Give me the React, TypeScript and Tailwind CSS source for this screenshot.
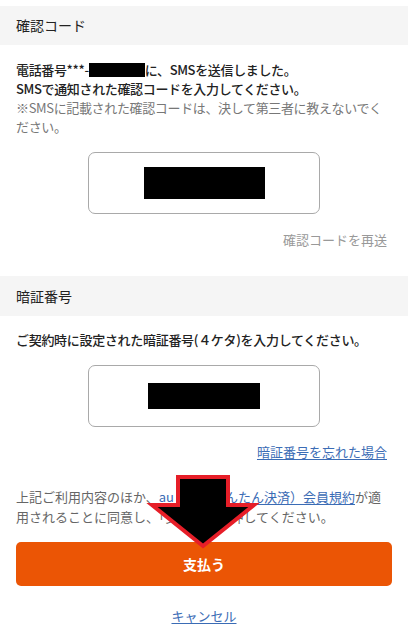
function MaskedInput({ maskW, maskH }: { maskW: string; maskH: string }) {
  return (
    <div className="mx-auto w-[232px] h-[62px] rounded-[7px] border border-[#a9a9a9] flex items-center justify-center">
      <div className={`${maskW} ${maskH} bg-black`} />
    </div>
  );
}

export default function App() {
  return (
    <div
      className="relative w-[408px] h-[642px] overflow-hidden bg-white text-[#222]"
      style={{ fontFamily: '"Noto Sans CJK JP", "Noto Sans", sans-serif' }}
    >
      <div className="pt-[6px]">
        <div className="h-[39px] bg-[#f5f5f5] px-4 flex items-center text-[14px]">
          確認コード
        </div>

        <div className="px-4 pt-[15px] text-[13px] leading-[19px] tracking-[-0.35px]">
          <p className="font-medium">
            電話番号***-
            <span className="inline-block w-[56px] h-[14px] bg-black align-[-2px]" />
            に、SMSを送信しました。
          </p>
          <p className="font-medium">SMSで通知された確認コードを入力してください。</p>
          <p className="text-[#777]">
            ※SMSに記載された確認コードは、決して第三者に教えないでください。
          </p>
        </div>

        <div className="pt-[16px]">
          <MaskedInput maskW="w-[121px]" maskH="h-[32px]" />
        </div>

        <div className="px-[21px] pt-[17px] text-right text-[13px] leading-[18px] text-[#999]">
          確認コードを再送
        </div>

        <div className="mt-[27px] h-[40px] bg-[#f5f5f5] px-4 flex items-center text-[14px]">
          暗証番号
        </div>

        <div className="px-4 pt-[14px] text-[13px] leading-[19px] font-medium tracking-[-0.3px]">
          ご契約時に設定された暗証番号(４ケタ)を入力してください。
        </div>

        <div className="pt-[16px]">
          <MaskedInput maskW="w-[112px]" maskH="h-[26px]" />
        </div>

        <div className="px-[21px] pt-[16px] text-right text-[13px] leading-[18px]">
          <a className="text-[#3b6cb5] underline underline-offset-2">暗証番号を忘れた場合</a>
        </div>

        <p className="px-4 pt-[26px] text-[13px] leading-[20px] text-[#666]">
          上記ご利用内容のほか、
          <a className="text-[#3b6cb5] underline underline-offset-2">au PAY（かんたん決済）会員規約</a>
          が適用されることに同意し、「支払う」を押してください。
        </p>

        <div className="px-4 pt-[15px]">
          <button className="w-full h-[44px] rounded-[5px] bg-[#eb5505] text-white text-[14px] font-bold">
            支払う
          </button>
        </div>

        <div className="pt-[21px] text-center text-[13px] leading-[18px]">
          <a className="text-[#3b6cb5] underline underline-offset-2">キャンセル</a>
        </div>
      </div>

      <svg className="absolute left-0 top-0" width="408" height="642" viewBox="0 0 408 642">
        <polygon
          points="178,477 228,477 228,505 254,505 203,546 152,505 178,505"
          fill="#000"
          stroke="#e61e28"
          strokeWidth="4"
          strokeLinejoin="miter"
        />
      </svg>
    </div>
  );
}
